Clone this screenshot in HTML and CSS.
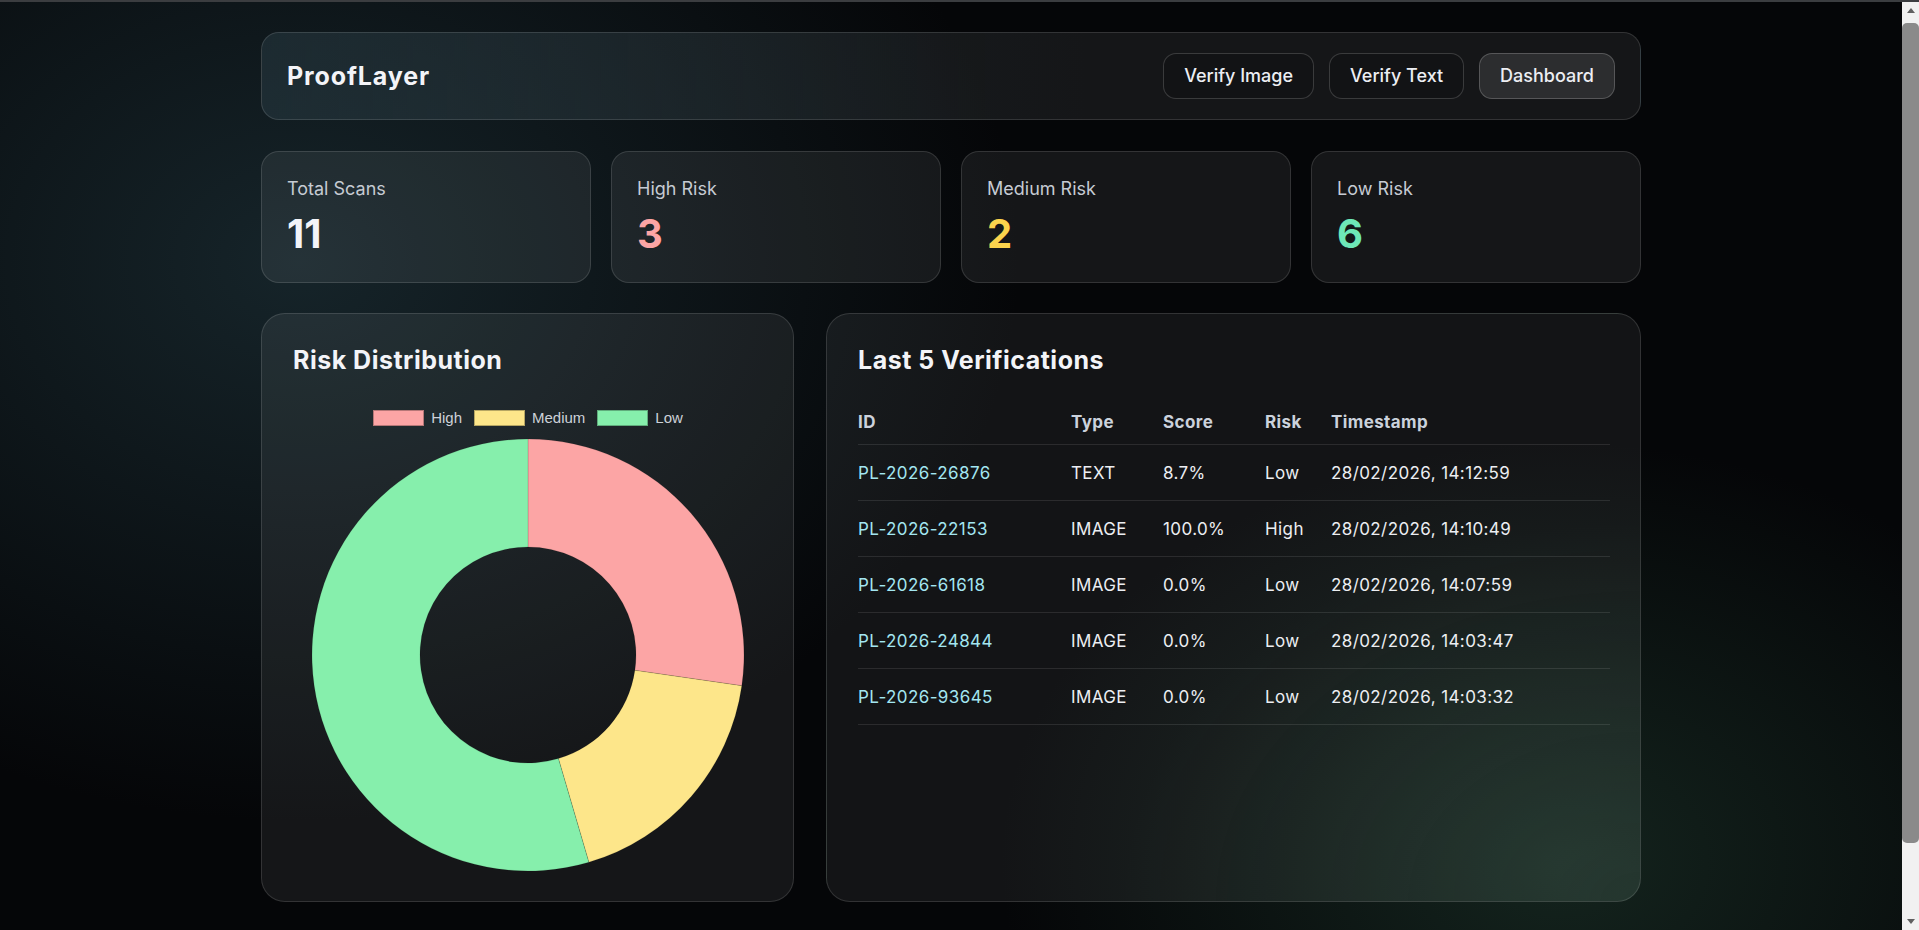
FILE: index.html
```html
<!DOCTYPE html>
<html lang="en">
<head>
<meta charset="utf-8">
<title>ProofLayer Dashboard</title>
<link rel="stylesheet" href="styles.css">
</head>
<body>
<div class="page">
  <div class="container">
    <header class="topbar">
      <div class="brand">ProofLayer</div>
      <nav class="nav">
        <button class="btn">Verify Image</button>
        <button class="btn">Verify Text</button>
        <button class="btn active">Dashboard</button>
      </nav>
    </header>

    <section class="stats">
      <div class="card stat">
        <div class="stat-label">Total Scans</div>
        <div class="stat-value">11</div>
      </div>
      <div class="card stat">
        <div class="stat-label">High Risk</div>
        <div class="stat-value high">3</div>
      </div>
      <div class="card stat">
        <div class="stat-label">Medium Risk</div>
        <div class="stat-value medium">2</div>
      </div>
      <div class="card stat">
        <div class="stat-label">Low Risk</div>
        <div class="stat-value low">6</div>
      </div>
    </section>

    <section class="panels">
      <div class="card panel chart-panel">
        <h2 class="panel-title">Risk Distribution</h2>
        <div class="legend">
          <span class="legend-item"><span class="swatch sw-high"></span>High</span>
          <span class="legend-item"><span class="swatch sw-medium"></span>Medium</span>
          <span class="legend-item"><span class="swatch sw-low"></span>Low</span>
        </div>
        <div class="chart-wrap">
          <svg class="donut" width="432" height="432" viewBox="0 0 432 432">
            <path class="seg seg-high" d="M216,0 A216,216 0 0 1 429.80,246.74 L322.90,231.37 A108,108 0 0 0 216,108 Z"/>
            <path class="seg seg-medium" d="M429.80,246.74 A216,216 0 0 1 276.85,423.25 L246.43,319.62 A108,108 0 0 0 322.90,231.37 Z"/>
            <path class="seg seg-low" d="M276.85,423.25 A216,216 0 1 1 216,0 L216,108 A108,108 0 1 0 246.43,319.62 Z"/>
          </svg>
        </div>
      </div>

      <div class="card panel table-panel">
        <h2 class="panel-title">Last 5 Verifications</h2>
        <table class="vtable">
          <colgroup>
            <col class="c-id"><col class="c-type"><col class="c-score"><col class="c-risk"><col class="c-ts">
          </colgroup>
          <thead>
            <tr><th>ID</th><th>Type</th><th>Score</th><th>Risk</th><th>Timestamp</th></tr>
          </thead>
          <tbody>
            <tr><td class="vid">PL-2026-26876</td><td>TEXT</td><td>8.7%</td><td>Low</td><td>28/02/2026, 14:12:59</td></tr>
            <tr><td class="vid">PL-2026-22153</td><td>IMAGE</td><td>100.0%</td><td>High</td><td>28/02/2026, 14:10:49</td></tr>
            <tr><td class="vid">PL-2026-61618</td><td>IMAGE</td><td>0.0%</td><td>Low</td><td>28/02/2026, 14:07:59</td></tr>
            <tr><td class="vid">PL-2026-24844</td><td>IMAGE</td><td>0.0%</td><td>Low</td><td>28/02/2026, 14:03:47</td></tr>
            <tr><td class="vid">PL-2026-93645</td><td>IMAGE</td><td>0.0%</td><td>Low</td><td>28/02/2026, 14:03:32</td></tr>
          </tbody>
        </table>
      </div>
    </section>
  </div>
</div>
<div class="scrollbar" aria-hidden="true">
  <div class="sb-arrow sb-up"></div>
  <div class="sb-track"><div class="sb-thumb"></div></div>
  <div class="sb-arrow sb-down"></div>
</div>
</body>
</html>
```

FILE: styles.css
```css
html {
  overflow: hidden;
  background: #050608;
}

* {
  box-sizing: border-box;
}

body {
  margin: 0;
  height: 930px;
  display: flex;
  overflow: hidden;
  border-top: 2px solid #3b3d40;
  font-family: Inter, "Noto Sans", "Liberation Sans", sans-serif;
  color: #eef0f4;
  background: #050608;
}

.page {
  flex: 1;
  padding: 30px 0 0;
  overflow: hidden;
  background:
    radial-gradient(ellipse 720px 560px at 300px 260px, rgba(34, 58, 66, 0.58), rgba(34, 58, 66, 0) 100%),
    radial-gradient(ellipse 560px 420px at 1560px 860px, rgba(38, 72, 56, 0.45), rgba(38, 72, 56, 0) 100%),
    #050608;
}

.container {
  width: 1380px;
  margin: 0 auto;
}

.card {
  background: rgba(255, 255, 255, 0.066);
  border: 1px solid rgba(255, 255, 255, 0.13);
}

/* Header */
.topbar {
  display: flex;
  align-items: center;
  justify-content: space-between;
  height: 88px;
  padding: 0 25px 0 25px;
  margin-bottom: 31px;
  border-radius: 18px;
  background: linear-gradient(90deg, rgba(40, 58, 66, 0.55), rgba(255, 255, 255, 0.066) 60%);
  border: 1px solid rgba(255, 255, 255, 0.13);
}

.brand {
  font-size: 25px;
  font-weight: 700;
  letter-spacing: 0.035em;
  color: #f3f4f8;
}

.nav {
  display: flex;
  gap: 15px;
}

.btn {
  font-family: inherit;
  font-size: 18px;
  font-weight: 500;
  line-height: 24px;
  color: #eceef3;
  background: rgba(0, 0, 0, 0.12);
  border: 1px solid rgba(255, 255, 255, 0.17);
  border-radius: 13px;
  padding: 10px 20px;
  cursor: pointer;
}

.btn.active {
  background: rgba(255, 255, 255, 0.1);
  border-color: rgba(255, 255, 255, 0.2);
}

/* Stats */
.stats {
  display: grid;
  grid-template-columns: repeat(4, 1fr);
  gap: 20px;
  margin-bottom: 30px;
}

.stat {
  height: 132px;
  border-radius: 18px;
  padding: 23px 24px 0 25px;
}

.stat-label {
  font-size: 18px;
  line-height: 27px;
  color: #c6cbd3;
}

.stat-value {
  margin-top: 8px;
  font-size: 40px;
  font-weight: 700;
  line-height: 48px;
  color: #f3f4f9;
}

.stat-value.high { color: #fca5a5; }
.stat-value.medium { color: #fcd34d; }
.stat-value.low { color: #6ee7b7; }

/* Panels */
.panels {
  display: grid;
  grid-template-columns: 533px 1fr;
  gap: 32px;
  height: 589px;
}

.panel {
  border-radius: 24px;
  padding: 31px 30px 30px 31px;
}

.panel-title {
  margin: 0;
  font-size: 25px;
  font-weight: 700;
  line-height: 30px;
  letter-spacing: 0.02em;
  color: #f3f4f8;
}

/* Chart */
.legend {
  display: flex;
  justify-content: center;
  align-items: center;
  gap: 12px;
  height: 16px;
  margin-top: 35px;
  font-family: "Liberation Sans", Arial, sans-serif;
  font-size: 15px;
  color: #cdd1d8;
}

.legend-item {
  display: flex;
  align-items: center;
  gap: 7px;
  line-height: 16px;
}

.swatch {
  display: inline-block;
  width: 51px;
  height: 16px;
  border: 1.5px solid rgba(0, 0, 0, 0.28);
}

.sw-high { background: #fca5a5; }
.sw-medium { background: #fde68a; }
.sw-low { background: #86efac; }

.chart-wrap {
  display: flex;
  justify-content: center;
  margin-top: 13px;
}

.donut {
  display: block;
  overflow: visible;
}

.seg {
  stroke: rgba(0, 0, 0, 0.12);
  stroke-width: 1;
}

.seg-high { fill: #fca5a5; }
.seg-medium { fill: #fde68a; }
.seg-low { fill: #86efac; }

/* Table panel */
.table-panel {
  background:
    radial-gradient(ellipse 520px 380px at 100% 100%, rgba(60, 100, 80, 0.18), rgba(60, 100, 80, 0) 100%),
    rgba(255, 255, 255, 0.06);
}

.vtable {
  width: 100%;
  margin-top: 22px;
  border-collapse: collapse;
  table-layout: fixed;
  font-size: 17px;
  letter-spacing: 0.4px;
}

.c-id { width: 213px; }
.c-type { width: 92px; }
.c-score { width: 102px; }
.c-risk { width: 66px; }

.vtable th {
  text-align: left;
  font-weight: 700;
  color: #cbd2dc;
  line-height: 24px;
  padding: 13px 0 10px;
  border-bottom: 1px solid rgba(255, 255, 255, 0.1);
}

.vtable td {
  line-height: 24px;
  padding: 16px 0 15px;
  color: #eceef2;
  border-bottom: 1px solid rgba(255, 255, 255, 0.1);
  white-space: nowrap;
}

.vtable td.vid {
  color: #a3e6f1;
}

/* Browser scrollbar strip */
.scrollbar {
  width: 17px;
  flex: none;
  display: flex;
  flex-direction: column;
  background: #f1f1f1;
}

.sb-arrow {
  height: 17px;
  flex: none;
  display: flex;
  align-items: center;
  justify-content: center;
}

.sb-up::before,
.sb-down::before {
  content: "";
  width: 0;
  height: 0;
  border-left: 4px solid transparent;
  border-right: 4px solid transparent;
}

.sb-up::before {
  border-bottom: 5px solid #606060;
}

.sb-down::before {
  border-top: 5px solid #606060;
}

.sb-track {
  flex: 1;
  display: flex;
  justify-content: center;
  padding: 4px 0 70px;
}

.sb-thumb {
  width: 9px;
  flex: 1;
  border-radius: 5px;
  background: #8a8a8a;
}
```
